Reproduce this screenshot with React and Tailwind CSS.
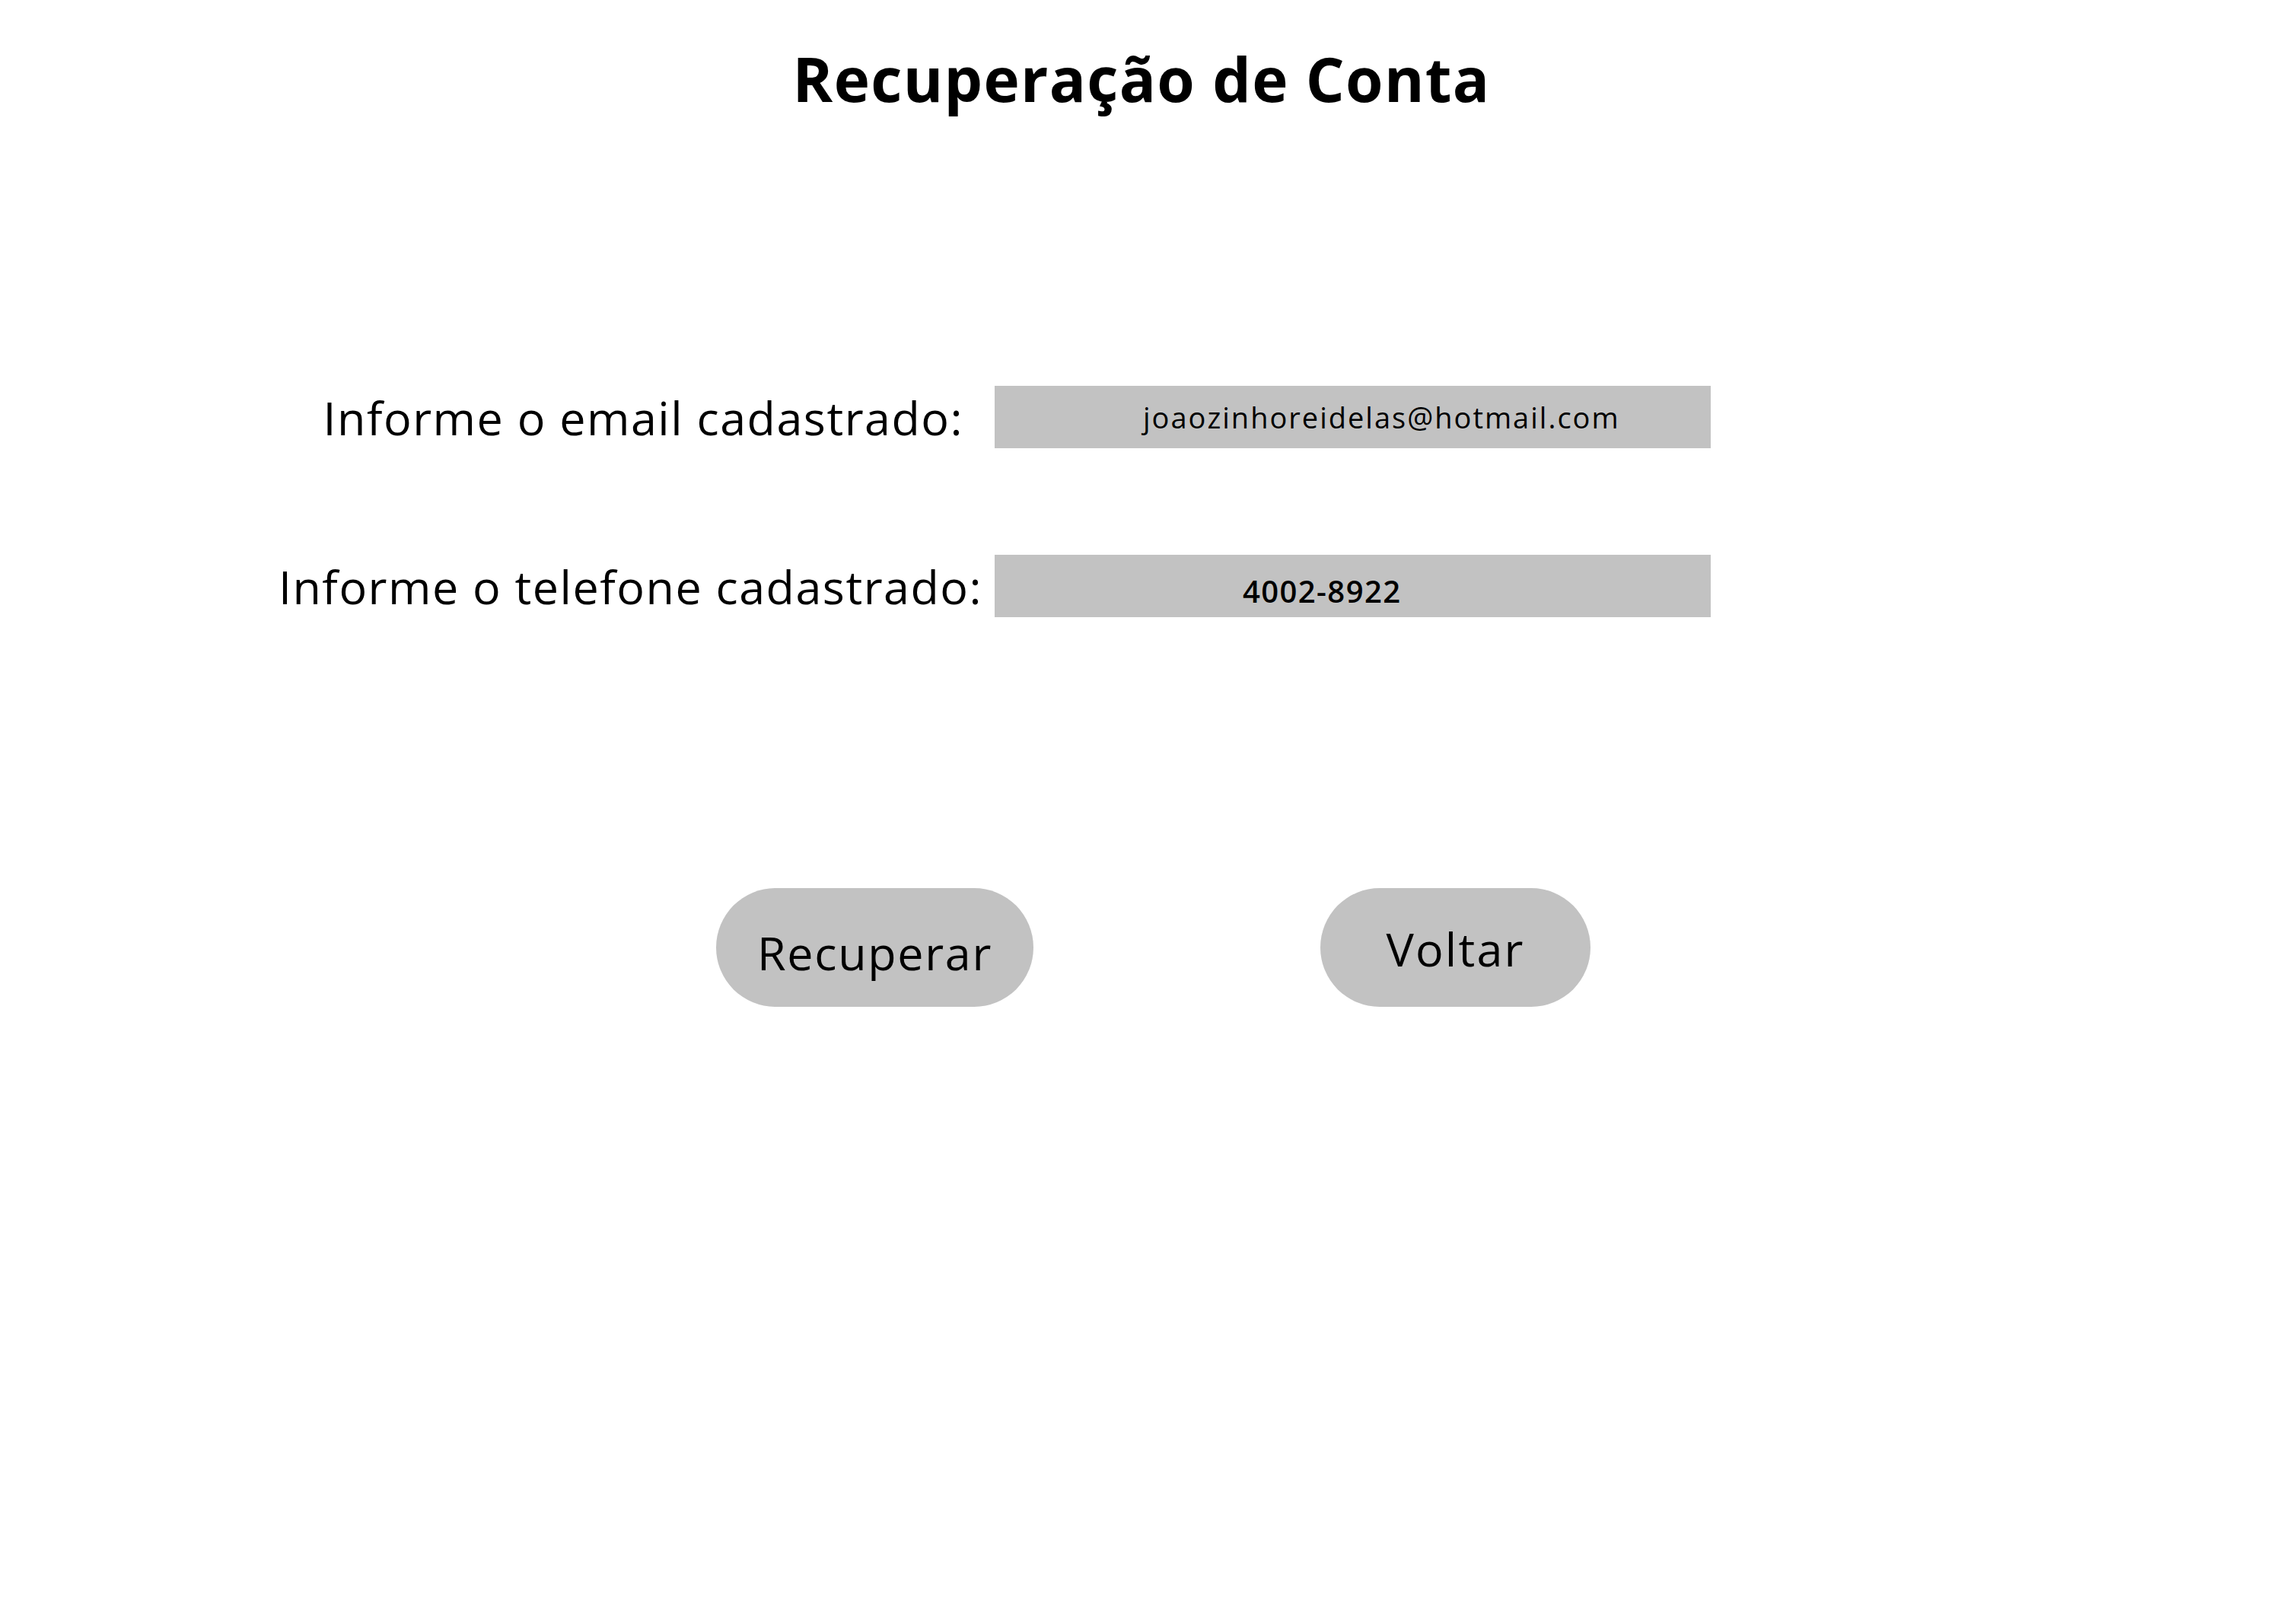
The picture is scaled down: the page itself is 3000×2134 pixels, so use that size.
export default function App() {
  const font = { fontFamily: "'Open Sans', 'Noto Sans', sans-serif" };
  return (
    <div className="w-full min-h-[2134px] bg-white text-black" style={font}>
      <h1 className="pt-[63px] text-center text-[80px] leading-none font-bold tracking-[1.3px]">Recuperação de Conta</h1>
      <div className="mt-[364px] flex flex-col gap-[140px]">
        <div className="flex h-[82px] items-center">
          <div className="w-[1307px] pr-[41px] text-right text-[61px] leading-none tracking-[1.5px]">Informe o email cadastrado:</div>
          <div className="flex h-[82px] w-[941px] items-center bg-[#c2c2c2] pl-[195px] text-[38px] leading-none font-medium tracking-[2px]">joaozinhoreidelas@hotmail.com</div>
        </div>
        <div className="flex h-[82px] items-center">
          <div className="w-[1307px] pr-[16px] text-right text-[61px] leading-none tracking-[1.5px]">Informe o telefone cadastrado:</div>
          <div className="flex h-[82px] w-[941px] items-center bg-[#c2c2c2] pl-[326px] pt-[14px] text-[40px] leading-none font-semibold tracking-[1.4px]">4002-8922</div>
        </div>
      </div>
      <div className="mt-[356px] flex pl-[941px] gap-[377px]">
        <button className="flex h-[156px] w-[417px] items-center justify-center rounded-full bg-[#c2c2c2] pt-[12px] text-[61px] leading-none tracking-[1.7px]">Recuperar</button>
        <button className="flex h-[156px] w-[355px] items-center justify-center rounded-full bg-[#c2c2c2] pt-[2px] text-[61px] leading-none tracking-[2.2px]">Voltar</button>
      </div>
    </div>
  );
}
